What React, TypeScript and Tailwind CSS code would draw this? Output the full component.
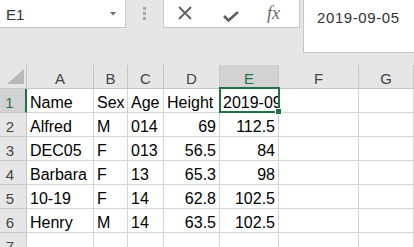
import React from "react";

const cols = [
  { w: "w-[67px]", label: "A" },
  { w: "w-[34px]", label: "B" },
  { w: "w-[36px]", label: "C" },
  { w: "w-[56px]", label: "D" },
  { w: "w-[59px]", label: "E" },
  { w: "w-[80px]", label: "F" },
  { w: "flex-1", label: "G" },
];

type Cell = { t: string; r?: boolean };
const rows: Cell[][] = [
  [{ t: "Name" }, { t: "Sex" }, { t: "Age" }, { t: "Height" }, { t: "2019-09-05" }],
  [{ t: "Alfred" }, { t: "M" }, { t: "014" }, { t: "69", r: true }, { t: "112.5", r: true }],
  [{ t: "DEC05" }, { t: "F" }, { t: "013" }, { t: "56.5", r: true }, { t: "84", r: true }],
  [{ t: "Barbara" }, { t: "F" }, { t: "13" }, { t: "65.3", r: true }, { t: "98", r: true }],
  [{ t: "10-19" }, { t: "F" }, { t: "14" }, { t: "62.8", r: true }, { t: "102.5", r: true }],
  [{ t: "Henry" }, { t: "M" }, { t: "14" }, { t: "63.5", r: true }, { t: "102.5", r: true }],
  [],
];

export default function App() {
  return (
    <div className="relative w-[414px] h-[247px] overflow-hidden bg-[#e6e6e6] font-['Liberation_Sans',Arial,sans-serif] text-black">
      {/* top bar */}
      <div className="flex h-[53px]">
        <div className="flex h-[28px] w-[303px]">
          <div className="flex h-[28px] w-[126px] items-center justify-between bg-white border-r border-b border-[#c6c6c6] pl-[6px] pr-[9px] pt-[2px]">
            <span className="text-[15px] leading-[17px] text-[#333]">E1</span>
            <svg width="6" height="4" viewBox="0 0 6 4" className="mb-[1px]">
              <path d="M0 0 H6 L3 3.5 Z" fill="#6a6a6a" />
            </svg>
          </div>
          <div className="flex w-[37px] items-center justify-center pb-[1px]">
            <div className="flex flex-col gap-[2px]">
              <div className="h-[3px] w-[3px] bg-[#a6a6a6]" />
              <div className="h-[3px] w-[3px] bg-[#a6a6a6]" />
              <div className="h-[3px] w-[3px] bg-[#a6a6a6]" />
            </div>
          </div>
          <div className="flex h-[28px] w-[137px] items-center bg-white border-l border-r border-b border-[#c6c6c6] pl-[14px]">
            <svg width="14" height="14" viewBox="0 0 14 14" className="mb-[1px]">
              <path d="M1 1 L13 13 M13 1 L1 13" stroke="#5f5f5f" strokeWidth="1.8" />
            </svg>
            <svg width="16" height="11" viewBox="0 0 16 11" className="ml-[31px] mt-[5px]">
              <path d="M1 5 L5.5 9.5 L15 1" stroke="#5f5f5f" strokeWidth="2.6" fill="none" />
            </svg>
            <span className="ml-[28px] font-['Liberation_Serif',serif] italic text-[18px] leading-[18px] text-[#6a6a6a] mb-[1px]">
              fx
            </span>
          </div>
        </div>
        <div className="h-[53px] flex-1 bg-white border-l border-b border-[#c6c6c6] pl-[13px] pt-[6px]">
          <span className="text-[15px] leading-[17px] tracking-[0.6px] text-[#333]">2019-09-05</span>
        </div>
      </div>
      <div className="h-[12px]" />

      {/* header row */}
      <div className="flex h-[24px]">
        <div className="flex w-[27px] items-end justify-end border-r border-b border-[#c6c6c6] pr-[2px] pb-[4px]">
          <svg width="17" height="15" viewBox="0 0 17 15">
            <path d="M17 0 V15 H0 Z" fill="#b8b8b8" />
          </svg>
        </div>
        {cols.map((c) => {
          const sel = c.label === "E";
          return (
            <div
              key={c.label}
              className={`${c.w} flex items-end justify-center pb-[1px] border-r border-b text-[15px] leading-[17px] ${
                sel ? "bg-[#d2d2d2] text-[#217346] border-b-[#217346] border-r-[#c6c6c6]" : "border-[#c6c6c6] text-[#444]"
              }`}
            >
              {c.label}
            </div>
          );
        })}
      </div>

      {/* data rows */}
      {rows.map((r, i) => {
        const sel = i === 0;
        return (
          <div key={i} className="flex h-[24px]">
            <div
              className={`flex w-[27px] items-end justify-center pr-[6px] pb-[1px] border-b text-[15px] leading-[17px] ${
                sel
                  ? "bg-[#d2d2d2] text-[#217346] border-b-[#c6c6c6] border-r-2 border-r-[#217346] w-[27px]"
                  : "border-r border-[#c6c6c6] text-[#444]"
              }`}
            >
              {i + 1}
            </div>
            {cols.map((c, j) => {
              const cell = r[j];
              return (
                <div
                  key={j}
                  className={`${c.w} flex items-end overflow-hidden whitespace-nowrap bg-white border-r border-b border-[#d4d4d4] pb-[1px] text-[16px] leading-[17px] ${
                    cell?.r ? "justify-end pr-[3px]" : "justify-start pl-[3px]"
                  }`}
                >
                  {cell ? cell.t : ""}
                </div>
              );
            })}
          </div>
        );
      })}

      {/* selection box */}
      <div className="absolute left-[219px] top-[87px] h-[26px] w-[61px] border-2 border-[#217346]" />
      <div className="absolute left-[275px] top-[108px] h-[7px] w-[7px] bg-[#217346] border border-white" />
    </div>
  );
}
